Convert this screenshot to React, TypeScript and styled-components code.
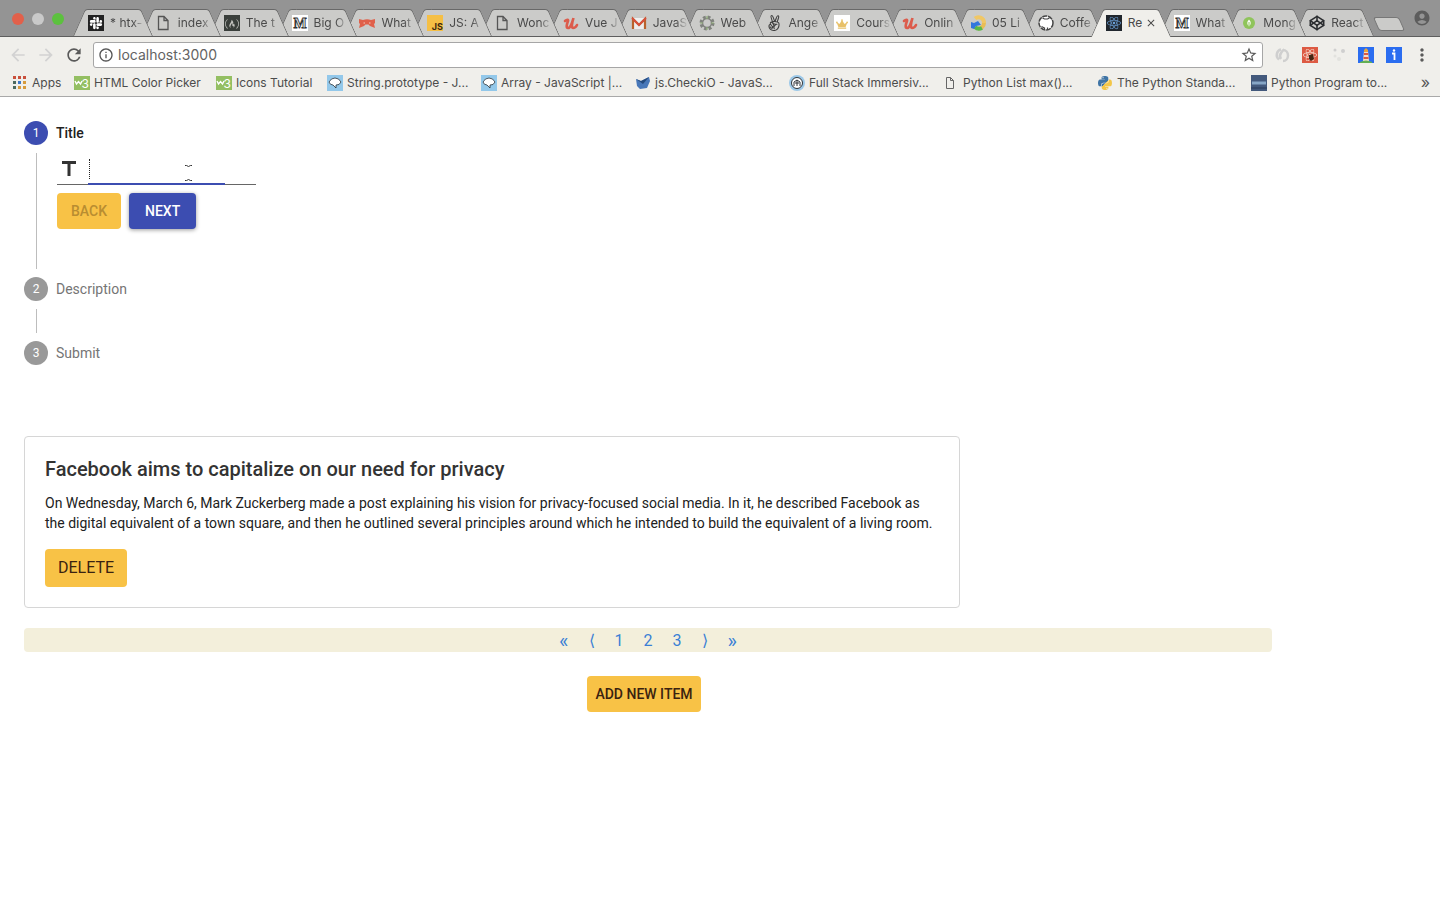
import React from "react";
import styled, { createGlobalStyle, css } from "styled-components";
import {
  MdAccountCircle,
  MdArrowBack,
  MdArrowForward,
  MdClose,
  MdInfoOutline,
  MdMoreVert,
  MdRefresh,
  MdStarBorder,
  MdTitle,
} from "react-icons/md";
import {
  FaAngellist,
  FaCrown,
  FaFreeCodeCamp,
  FaPython,
  FaReact,
  FaSlack,
} from "react-icons/fa";
import { Codepen } from "lucide-react";

const chromeFont = `Inter, "Liberation Sans", sans-serif`;
const pageFont = `Roboto, "Liberation Sans", sans-serif`;
const amber = "#f8c246";
const indigo = "#3c4db1";
const toolbarColor = "#f0efeb";

const GlobalStyle = createGlobalStyle`
  *, *::before, *::after { box-sizing: border-box; }
  body { margin: 0; background: #fff; font-family: ${pageFont}; color: #212121; }
  button, input { font-family: inherit; }
  ol, ul, h2, p { margin: 0; padding: 0; }
  ol, ul { list-style: none; }
`;

/* ---------- Browser frame ---------- */

const Browser = styled.header`
  font-family: ${chromeFont};
  background: ${toolbarColor};
  border-bottom: 1px solid #a9a9a9;
`;

const TabStrip = styled.div`
  display: flex;
  align-items: flex-end;
  height: 37px;
  background: #949494;
  border-bottom: 1px solid #5e5e5e;
`;

const WindowButtons = styled.div`
  display: flex;
  align-items: center;
  gap: 8px;
  width: 79px;
  height: 36px;
  padding: 2px 0 0 12px;
`;

const WindowButton = styled.button<{ $color: string }>`
  width: 12px;
  height: 12px;
  padding: 0;
  border: 0;
  border-radius: 50%;
  background: ${(p) => p.$color};
`;

const TabList = styled.ul`
  display: flex;
  flex: 1;
  min-width: 0;
  isolation: isolate;
`;

const tabSide = css`
  content: "";
  position: absolute;
  top: 0;
  bottom: 0;
  z-index: -1;
  width: 72%;
`;

const Tab = styled.li<{ $active?: boolean; $order: number }>`
  position: relative;
  z-index: ${(p) => (p.$active ? 50 : p.$order)};
  display: flex;
  flex: 1 1 0;
  align-items: center;
  gap: 6px;
  min-width: 0;
  height: ${(p) => (p.$active ? 28 : 27)}px;
  margin-bottom: ${(p) => (p.$active ? -1 : 0)}px;
  padding: 0 2px 0 9px;
  font-size: 12px;
  line-height: 16px;
  color: #4a4a4a;

  &::before {
    ${tabSide}
    left: 0;
    background: ${(p) => (p.$active ? toolbarColor : "#cbcbc9")};
    border: solid #686868;
    border-width: 1px 0 0 1px;
    border-radius: 3px 0 0 0;
    transform: skewX(-24deg);
  }

  &::after {
    ${tabSide}
    right: 0;
    background: ${(p) => (p.$active ? toolbarColor : "#cbcbc9")};
    border: solid #686868;
    border-width: 1px 1px 0 0;
    border-radius: 0 3px 0 0;
    transform: skewX(24deg);
  }
`;

const TabTitle = styled.span<{ $faded: boolean }>`
  flex: 1;
  min-width: 0;
  overflow: hidden;
  white-space: nowrap;
  mask-image: ${(p) => (p.$faded ? "linear-gradient(to right, #000 65%, transparent)" : "none")};
`;

const TabClose = styled.button`
  display: flex;
  margin: 0 6px 0 -6px;
  padding: 0;
  border: 0;
  background: none;
  color: #4a4a4a;
  font-size: 12px;
`;

const StripEnd = styled.div`
  display: flex;
  align-items: center;
  justify-content: space-between;
  width: 72px;
  height: 36px;
  padding: 0 9px 0 8px;
`;

const NewTab = styled.button`
  width: 26px;
  height: 14px;
  margin-top: 12px;
  padding: 0;
  border: 1px solid #777;
  border-radius: 3px;
  background: #cbcbc9;
  transform: skewX(24deg);
`;

const IconButton = styled.button<{ $color?: string; $size?: number }>`
  display: flex;
  align-items: center;
  justify-content: center;
  flex: none;
  padding: 0;
  border: 0;
  background: none;
  color: ${(p) => p.$color ?? "#5a5a5a"};
  font-size: ${(p) => p.$size ?? 20}px;
`;

const Toolbar = styled.div`
  display: flex;
  align-items: center;
  gap: 8px;
  height: 36px;
  padding: 0 8px;
`;

const AddressBar = styled.label`
  display: flex;
  flex: 1;
  align-items: center;
  gap: 4px;
  height: 26px;
  margin-left: 1px;
  padding: 0 4px;
  border: 1px solid #a6a6a6;
  border-radius: 3px;
  background: #fff;
  color: #555;
`;

const AddressInput = styled.input`
  flex: 1;
  min-width: 0;
  padding: 0;
  border: 0;
  outline: 0;
  background: none;
  color: #636363;
  font-size: 14px;
  line-height: 20px;
`;

const Extensions = styled.div`
  display: flex;
  align-items: center;
  gap: 12px;
  padding: 0 2px 0 3px;
`;

const Bookmarks = styled.nav`
  display: flex;
  align-items: center;
  height: 23px;
  padding: 0 8px 4px 12px;
`;

const Bookmark = styled.a<{ $width: number }>`
  display: flex;
  flex: 0 1 ${(p) => p.$width}px;
  align-items: center;
  gap: 4px;
  min-width: 0;
  overflow: hidden;
  color: #4c4c4c;
  font-size: 12px;
  line-height: 16px;
  text-decoration: none;
  white-space: nowrap;
`;

const MoreBookmarks = styled.button`
  margin-left: auto;
  padding: 0 2px 2px 0;
  border: 0;
  background: none;
  color: #555;
  font-size: 16px;
  line-height: 16px;
`;

const Glyph = styled.svg`
  flex: none;
  width: 16px;
  height: 16px;
`;

/* ---------- Site icons ---------- */

const FileIcon = () => (
  <Glyph viewBox="0 0 16 16" fill="none" stroke="#555" strokeWidth="1.3">
    <path d="M2.500 1.500h5.500l4 4v9h-9.500z M8 1.500v4h4" />
  </Glyph>
);
const SmallFileIcon = () => (
  <Glyph viewBox="0 0 16 16" fill="none" stroke="#666">
    <path d="M3.500 2.500h4l3 3v8h-7z M7.500 2.500v3h3" />
  </Glyph>
);
const SlackIcon = () => (
  <Glyph viewBox="0 0 16 16">
    <rect width="16" height="16" fill="#222" />
    <FaSlack x="1" y="1" size={14} color="#fff" />
  </Glyph>
);
const CampIcon = () => (
  <Glyph viewBox="0 0 16 16">
    <rect width="16" height="16" fill="#3a3f3b" />
    <FaFreeCodeCamp x="1" y="2" size={14} color="#c4c4c0" />
  </Glyph>
);
const MediumIcon = () => (
  <Glyph viewBox="0 0 16 16">
    <rect width="16" height="16" fill="#fff" />
    <text x="8" y="13" textAnchor="middle" fontFamily="Liberation Serif" fontWeight="700" fontSize="14" fill="#e8e8e8" stroke="#333" strokeWidth=".8">M</text>
  </Glyph>
);
const BowIcon = () => (
  <Glyph viewBox="0 0 16 16" fill="#e0604a">
    <path d="M0 4l4 1q4-1.500 8 0l4-1v4l-1 1 1 4-5-2-1.500-1.500h-3L5 11l-5 2 1-4-1-1z" />
    <path d="M4.500 8h1.500M10 8h1.500" stroke="#f3c9bf" />
  </Glyph>
);
const JsIcon = () => (
  <Glyph viewBox="0 0 16 16">
    <rect width="16" height="16" fill="#f5bf45" />
    <text x="16" y="15" textAnchor="end" fontFamily="Inter" fontWeight="700" fontSize="9" fill="#3d2a10">JS</text>
  </Glyph>
);
const UdemyIcon = () => (
  <Glyph viewBox="0 0 16 16" fill="none" stroke="#dc5c4c" strokeWidth="2.600" strokeLinecap="round">
    <path d="M2 6c2-2 3.500-1.500 3 0-1.500 4-2 7 0 7 2.500 0 4-5 5.500-10-1.500 5-2.500 10-.5 10 1.500 0 3-1 4-3" />
  </Glyph>
);
const MailIcon = () => (
  <Glyph viewBox="0 0 16 16">
    <path d="M1 3h14v11H1z" fill="#eee" />
    <path d="M2 14V4l6 6 6-6v10" fill="none" stroke="#b9632d" strokeWidth="2.200" />
    <path d="M1 3l7 7 7-7" fill="none" stroke="#d9503c" strokeWidth="1.800" />
  </Glyph>
);
const WheelIcon = () => (
  <Glyph viewBox="0 0 16 16" fill="none" stroke="#80837e">
    <circle cx="8" cy="8" r="6" strokeWidth="3" strokeDasharray="2.700 2.012" />
    <circle cx="8" cy="8" r="4.500" strokeWidth="1.500" />
    <path d="M8 1v3M8 12v3M1 8h3M12 8h3" strokeWidth="1.200" stroke="#8fae78" />
  </Glyph>
);
const HandIcon = () => (
  <Glyph viewBox="0 0 16 16">
    <FaAngellist size={16} color="#3f3f3f" />
  </Glyph>
);
const CrownIcon = () => (
  <Glyph viewBox="0 0 16 16">
    <rect width="16" height="16" fill="#fff" />
    <FaCrown x="2" y="3" size={12} color="#e8c169" />
  </Glyph>
);
const SwirlIcon = () => (
  <Glyph viewBox="0 0 16 16" fill="none" strokeWidth="4">
    <path d="M5 3.500A5.500 5.500 0 0 1 14 8" stroke="#f0c765" />
    <path d="M14 8a5.500 5.500 0 0 1-6 5.500" stroke="#e9bd55" />
    <path d="M12 13q-4 2-7-1" stroke="#59b94a" />
    <path d="M1 13V7l3 1 4-2 3 4-5 1-2 3z" fill="#3277dd" />
  </Glyph>
);
const GithubIcon = () => (
  <Glyph viewBox="0 0 16 16">
    <circle cx="8" cy="8" r="7" fill="#fff" stroke="#444" strokeWidth="1.500" strokeDasharray="5 .8" />
    <path d="M4.500 3l2 1h3l2-1M3.500 11.500l3 1.500M6.500 15v-2.500M9.500 15v-2.500" fill="none" stroke="#444" strokeWidth="1.200" />
  </Glyph>
);
const ReactIcon = () => (
  <Glyph viewBox="0 0 16 16">
    <rect width="16" height="16" fill="#20262d" />
    <FaReact x="1" y="1" size={14} color="#6b9fd6" />
  </Glyph>
);
const LeafIcon = () => (
  <Glyph viewBox="0 0 16 16">
    <circle cx="8" cy="8" r="6" fill="#8fc45b" />
    <path d="M8 4.500q3.500 3.500 0 7-3.500-3.500 0-7z" fill="#fff" />
    <path d="M8 7v4" stroke="#8fc45b" />
  </Glyph>
);
const PenIcon = () => (
  <Glyph viewBox="0 0 16 16">
    <Codepen size={16} color="#2b2d30" strokeWidth={2.4} />
  </Glyph>
);

const appColors = ["#c9503c", "#c9503c", "#c9503c", "#4d6a60", "#3d78c8", "#d79b3c", "#4d6a60", "#d79b3c", "#d79b3c"];
const AppsIcon = () => (
  <Glyph viewBox="0 0 16 16">
    {appColors.map((color, i) => (
      <rect key={i} x={1 + (i % 3) * 5} y={1 + Math.floor(i / 3) * 5} width="3" height="3" fill={color} />
    ))}
  </Glyph>
);
const W3Icon = () => (
  <Glyph viewBox="0 0 16 16">
    <rect y="1" width="16" height="14" fill="#94bf62" />
    <path d="M1 6l1.500 3L4.500 6.500 6.500 9 8 6" fill="none" stroke="#fff" strokeWidth="1.400" />
    <text x="15" y="13" textAnchor="end" fontFamily="Inter" fontSize="12" fill="#fff">3</text>
  </Glyph>
);
const DinoIcon = () => (
  <Glyph viewBox="0 0 16 16">
    <rect width="16" height="16" fill="#93c8ea" />
    <path d="M2 7q2-4 6-4t6 4l-2 2.500-3 .5v3l-3-3q-3 0-4-3z" fill="#fff" stroke="#27323b" strokeWidth=".8" />
  </Glyph>
);
const CheckioIcon = () => (
  <Glyph viewBox="0 0 16 16">
    <path d="M1 4l5 2 8-4 1 4-3 7-7 1-3-3z" fill="#4877b8" />
    <path d="M1 4l5 2 8-4-6 7z" fill="#244a7d" />
  </Glyph>
);
const ImmersiveIcon = () => (
  <Glyph viewBox="0 0 16 16">
    <circle cx="8" cy="8" r="8" fill="#9cc8e8" />
    <circle cx="8" cy="8" r="5.500" fill="#fff" stroke="#30353a" />
    <path d="M5 11V7l3-2 3 2v4M6 8h4M8 5v6" fill="none" stroke="#30353a" />
  </Glyph>
);
const PythonIcon = () => (
  <Glyph viewBox="0 0 16 16">
    <defs>
      <linearGradient id="python" x2="1" y2="1">
        <stop offset=".5" stopColor="#3f74a5" />
        <stop offset=".5" stopColor="#f3c648" />
      </linearGradient>
    </defs>
    <FaPython size={16} fill="url(#python)" />
  </Glyph>
);
const ProgramIcon = () => (
  <Glyph viewBox="0 0 16 16">
    <rect width="16" height="16" fill="#43597c" />
    <path d="M1 8h14" stroke="#86a6c6" strokeWidth="3" />
    <path d="M0 13h16" stroke="#35496a" strokeWidth="2" />
  </Glyph>
);

const RingsIcon = () => (
  <Glyph viewBox="0 0 16 16" fill="none" stroke="#cfcfcf" strokeWidth="2.500">
    <path d="M7 2.500a5 5.500 0 0 0-2 10M7 12q-2-3 0-6t3-3.500M9 3a5 5.500 0 0 1 0 11" />
  </Glyph>
);
const AtomIcon = () => (
  <Glyph viewBox="0 0 16 16">
    <rect width="16" height="16" fill="#dd5a43" />
    <FaReact x="1" y="1" size={14} color="#f7e3d8" />
    <path d="M7 8l4-1 1 5-3 2-2-2z" fill="#462614" />
  </Glyph>
);
const DotsIcon = () => (
  <Glyph viewBox="0 0 16 16" fill="#cfcfcf">
    <circle cx="5" cy="3" r="1.500" />
    <circle cx="13" cy="4" r="2" />
    <circle cx="5" cy="9" r="1.500" fill="#e2e2de" />
    <circle cx="9" cy="12" r="2" fill="#e2e2de" />
  </Glyph>
);
const LighthouseIcon = () => (
  <Glyph viewBox="0 0 16 16">
    <rect width="16" height="16" fill="#2b6df0" />
    <path d="M6 4h4l1 10H5z" fill="#f3dcc8" />
    <path d="M6 3l2-2 2 2v2H6z" fill="#e9a33d" />
    <path d="M6 7h4.300M5.500 11h5" stroke="#dd5a43" strokeWidth="2" />
    <path d="M2 15q6-3 12 0v1H2z" fill="#63b054" />
  </Glyph>
);
const InfoBadgeIcon = () => (
  <Glyph viewBox="0 0 16 16">
    <rect width="16" height="16" fill="#2b6df0" />
    <path d="M6 6.500h2.500V13" fill="none" stroke="#fff" strokeWidth="1.800" />
    <circle cx="8" cy="3.500" r="1.200" fill="#fff" />
  </Glyph>
);

type Item = { title: string; icon: React.FC };

const tabs: (Item & { active?: boolean })[] = [
  { title: "* htx-", icon: SlackIcon },
  { title: "index", icon: FileIcon },
  { title: "The t", icon: CampIcon },
  { title: "Big O", icon: MediumIcon },
  { title: "What", icon: BowIcon },
  { title: "JS: A", icon: JsIcon },
  { title: "Wonc", icon: FileIcon },
  { title: "Vue J", icon: UdemyIcon },
  { title: "JavaS", icon: MailIcon },
  { title: "Web", icon: WheelIcon },
  { title: "Ange", icon: HandIcon },
  { title: "Cours", icon: CrownIcon },
  { title: "Onlin", icon: UdemyIcon },
  { title: "05 Li", icon: SwirlIcon },
  { title: "Coffe", icon: GithubIcon },
  { title: "Re", icon: ReactIcon, active: true },
  { title: "What", icon: MediumIcon },
  { title: "Mong", icon: LeafIcon },
  { title: "React", icon: PenIcon },
];

const bookmarks: (Item & { width: number })[] = [
  { title: "Apps", icon: AppsIcon, width: 62 },
  { title: "HTML Color Picker", icon: W3Icon, width: 142 },
  { title: "Icons Tutorial", icon: W3Icon, width: 111 },
  { title: "String.prototype - J...", icon: DinoIcon, width: 154 },
  { title: "Array - JavaScript |...", icon: DinoIcon, width: 154 },
  { title: "js.CheckiO - JavaS...", icon: CheckioIcon, width: 154 },
  { title: "Full Stack Immersiv...", icon: ImmersiveIcon, width: 154 },
  { title: "Python List max()...", icon: SmallFileIcon, width: 154 },
  { title: "The Python Standa...", icon: PythonIcon, width: 154 },
  { title: "Python Program to...", icon: ProgramIcon, width: 154 },
];

const extensions = [RingsIcon, AtomIcon, DotsIcon, LighthouseIcon, InfoBadgeIcon];

/* ---------- Page ---------- */

const Page = styled.main`
  width: 90%;
  padding: 24px;
`;

const Stepper = styled.ol`
  display: flex;
  flex-direction: column;
  gap: 8px;
`;

const StepHeader = styled.div<{ $active?: boolean }>`
  display: flex;
  align-items: center;
  gap: 8px;
  font-size: 14px;
  line-height: 24px;
  font-weight: ${(p) => (p.$active ? 500 : 400)};
  color: ${(p) => (p.$active ? "#212121" : "#757575")};
`;

const StepNumber = styled.span<{ $active?: boolean }>`
  width: 24px;
  height: 24px;
  border-radius: 50%;
  background: ${(p) => (p.$active ? indigo : "#999")};
  color: #fff;
  font-size: 12px;
  font-weight: 400;
  text-align: center;
`;

const StepBody = styled.div`
  min-height: 24px;
  margin: 8px 0 0 12px;
  padding-left: 20px;
  border-left: 1px solid #bdbdbd;
`;

const StepForm = styled.form`
  padding-bottom: 40px;
`;

const Field = styled.label`
  position: relative;
  display: flex;
  align-items: center;
  gap: 8px;
  width: 199px;
  height: 32px;
  border-bottom: 1px solid #666;
  color: #333;
  font-size: 24px;
`;

const FieldInput = styled.input`
  flex: 1;
  min-width: 0;
  height: 24px;
  padding: 0;
  border: 0;
  outline: 0;
  background: none;
  font-size: 16px;
`;

const FocusLine = styled.span`
  position: absolute;
  left: 31px;
  right: 31px;
  bottom: -1px;
  height: 2px;
  background: ${indigo};
`;

const Caret = styled.span`
  position: absolute;
  left: 32px;
  top: 6px;
  height: 20px;
  border-left: 1px dotted #222;
`;

const Pointer = styled.svg`
  position: absolute;
  left: 127px;
  top: 11px;
  width: 9px;
  height: 18px;
`;

const Actions = styled.div`
  display: flex;
  gap: 8px;
  margin-top: 8px;
`;

const Button = styled.button<{ $tone?: "primary" }>`
  min-width: 64px;
  height: 36px;
  padding: 0 ${(p) => (p.$tone ? 16 : 8)}px;
  border: 0;
  border-radius: 4px;
  background: ${(p) => (p.$tone ? indigo : amber)};
  color: ${(p) => (p.$tone ? "#fff" : "#3a2210")};
  font-size: 14px;
  line-height: 24px;
  font-weight: 500;
  white-space: nowrap;
  box-shadow: ${(p) => (p.$tone ? "0 1px 4px rgba(0, 0, 0, 0.4)" : "none")};

  &:disabled {
    color: #b98d31;
  }
`;

const Card = styled.article`
  width: 75%;
  margin-top: 71px;
  padding: 20px;
  border: 1px solid #d6d6d6;
  border-radius: 4px;
`;

const CardTitle = styled.h2`
  font-size: 20px;
  line-height: 24px;
  font-weight: 500;
  color: #333;
`;

const CardText = styled.p`
  margin: 12px 0 16px;
  font-size: 14px;
  line-height: 20px;
`;

const DeleteButton = styled.button`
  display: block;
  height: 38px;
  padding: 0 13px;
  border: 0;
  border-radius: 4px;
  background: ${amber};
  color: #3a2210;
  font-size: 16px;
  line-height: 24px;
`;

const Pagination = styled.nav`
  display: flex;
  justify-content: center;
  height: 24px;
  margin-top: 20px;
  border-radius: 4px;
  background: #f3efdb;
`;

const PageLink = styled.a<{ $edge?: boolean }>`
  min-width: 26px;
  padding: 0 10px;
  color: #3a7fd5;
  font-size: ${(p) => (p.$edge ? 20 : 16)}px;
  line-height: 26px;
  text-align: center;
  text-decoration: none;
`;

const AddRow = styled.div`
  display: flex;
  justify-content: center;
  padding: 24px 8px 0 0;
`;

export default function App() {
  return (
    <>
      <GlobalStyle />
      <Browser>
        <TabStrip>
          <WindowButtons>
            <WindowButton $color="#e2604a" aria-label="Close window" />
            <WindowButton $color="#c9c9c9" aria-label="Minimize window" />
            <WindowButton $color="#5cc13e" aria-label="Zoom window" />
          </WindowButtons>
          <TabList>
            {tabs.map(({ title, icon: Icon, active }, i) => (
              <Tab key={i} $active={active} $order={tabs.length - i}>
                <Icon />
                <TabTitle $faded={!active}>{title}</TabTitle>
                {active && (
                  <TabClose aria-label="Close tab">
                    <MdClose />
                  </TabClose>
                )}
              </Tab>
            ))}
          </TabList>
          <StripEnd>
            <NewTab aria-label="New tab" />
            <IconButton $color="#5c5c5c" $size={18} aria-label="Profile">
              <MdAccountCircle />
            </IconButton>
          </StripEnd>
        </TabStrip>
        <Toolbar>
          <IconButton $color="#d2d2d2" aria-label="Back"><MdArrowBack /></IconButton>
          <IconButton $color="#d2d2d2" aria-label="Forward"><MdArrowForward /></IconButton>
          <IconButton aria-label="Reload"><MdRefresh /></IconButton>
          <AddressBar>
            <MdInfoOutline size={16} />
            <AddressInput aria-label="Address" defaultValue="localhost:3000" />
            <IconButton $size={18} aria-label="Bookmark this page"><MdStarBorder /></IconButton>
          </AddressBar>
          <Extensions>
            {extensions.map((Icon, i) => (
              <Icon key={i} />
            ))}
          </Extensions>
          <IconButton $size={20} aria-label="Menu"><MdMoreVert /></IconButton>
        </Toolbar>
        <Bookmarks aria-label="Bookmarks">
          {bookmarks.map(({ title, icon: Icon, width }) => (
            <Bookmark key={title} href="#" $width={width}>
              <Icon />
              {title}
            </Bookmark>
          ))}
          <MoreBookmarks aria-label="More bookmarks">»</MoreBookmarks>
        </Bookmarks>
      </Browser>

      <Page>
        <Stepper>
          <li>
            <StepHeader $active>
              <StepNumber $active>1</StepNumber>
              Title
            </StepHeader>
            <StepBody>
              <StepForm onSubmit={(e) => e.preventDefault()}>
                <Field>
                  <MdTitle />
                  <FieldInput aria-label="Title" />
                  <FocusLine />
                  <Caret />
                  <Pointer viewBox="0 0 9 18" fill="none" stroke="#333">
                    <path d="M1 1.500h1.500l2 1 2-1h1.500M1 16.500h1.500l2-1 2 1h1.500" />
                  </Pointer>
                </Field>
                <Actions>
                  <Button type="button" disabled>BACK</Button>
                  <Button type="submit" $tone="primary">NEXT</Button>
                </Actions>
              </StepForm>
            </StepBody>
          </li>
          <li>
            <StepHeader>
              <StepNumber>2</StepNumber>
              Description
            </StepHeader>
            <StepBody />
          </li>
          <li>
            <StepHeader>
              <StepNumber>3</StepNumber>
              Submit
            </StepHeader>
          </li>
        </Stepper>

        <Card>
          <CardTitle>Facebook aims to capitalize on our need for privacy</CardTitle>
          <CardText>
            On Wednesday, March 6, Mark Zuckerberg made a post explaining his vision for privacy-focused
            social media. In it, he described Facebook as the digital equivalent of a town square, and then
            he outlined several principles around which he intended to build the equivalent of a living room.
          </CardText>
          <DeleteButton>DELETE</DeleteButton>
        </Card>

        <Pagination aria-label="Pages">
          {["«", "⟨", "1", "2", "3", "⟩", "»"].map((label) => (
            <PageLink key={label} href="#" $edge={label === "«" || label === "»"}>{label}</PageLink>
          ))}
        </Pagination>

        <AddRow>
          <Button>ADD NEW ITEM</Button>
        </AddRow>
      </Page>
    </>
  );
}
